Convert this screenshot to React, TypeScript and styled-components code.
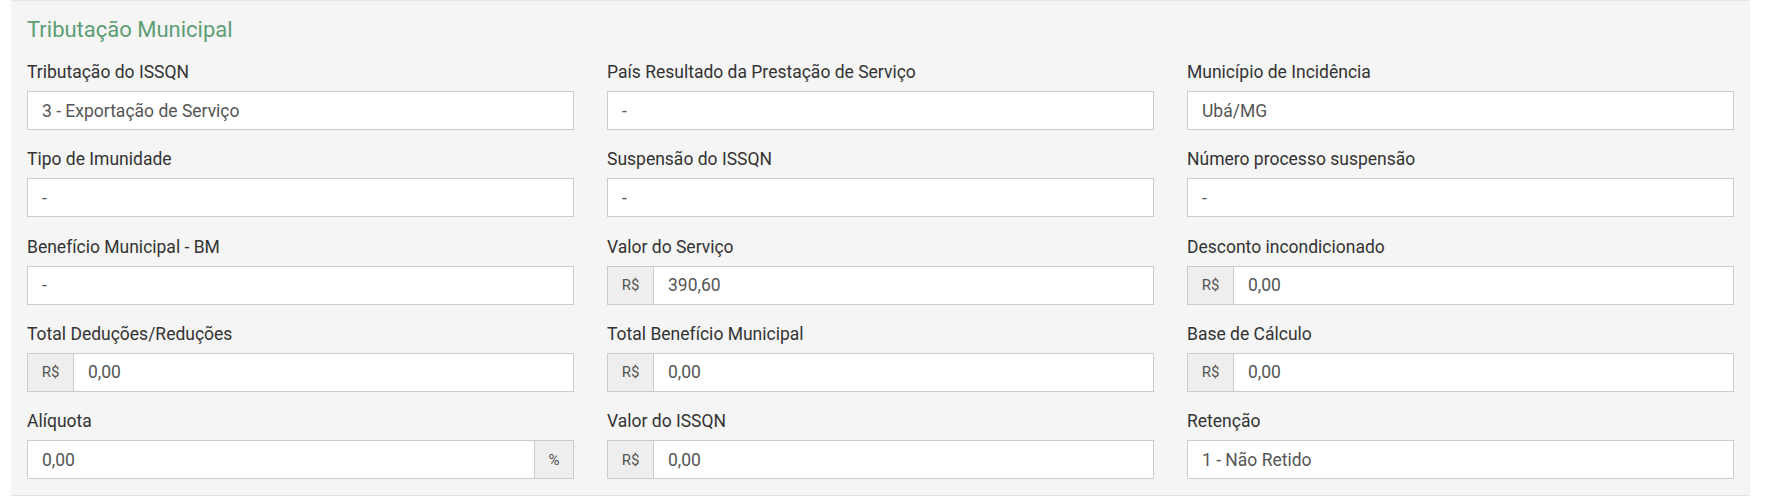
import React from "react";
import styled, { createGlobalStyle } from "styled-components";

const GlobalStyle = createGlobalStyle`
  html, body {
    margin: 0;
    padding: 0;
    background: #ffffff;
  }
  body {
    font-family: Roboto, "Noto Sans", "Liberation Sans", sans-serif;
    -webkit-font-smoothing: antialiased;
  }
  * { box-sizing: border-box; }
`;

const Page = styled.div`
  padding: 0 16px 0 11px;
`;

const Panel = styled.section`
  background: #f5f5f5;
  border-top: 1px solid #e6e6e6;
  border-bottom: 1px solid #e3e3e3;
  padding: 16px 16px 16px 16px;
`;

const Title = styled.h3`
  margin: 0 0 18px 0;
  font-size: 22px;
  line-height: 26px;
  font-weight: 400;
  color: #5d9d76;
`;

const Grid = styled.div`
  display: grid;
  grid-template-columns: repeat(3, 1fr);
  column-gap: 33px;
  row-gap: 18.25px;
`;

const Field = styled.div`
  display: flex;
  flex-direction: column;
  min-width: 0;
`;

const Label = styled.label`
  font-size: 17.5px;
  line-height: 23px;
  color: #333333;
  margin-bottom: 7px;
  white-space: nowrap;
`;

const InputGroup = styled.div`
  display: flex;
  height: 39px;
  border: 1px solid #cccccc;
  background: #ffffff;
`;

const Value = styled.div`
  flex: 1;
  display: flex;
  align-items: center;
  padding: 0 14px;
  font-size: 17.5px;
  color: #555555;
  white-space: nowrap;
  overflow: hidden;
`;

const Addon = styled.span<{ $side: "left" | "right"; $w: number }>`
  flex: 0 0 ${(p) => p.$w}px;
  display: flex;
  align-items: center;
  justify-content: center;
  background: #eeeeee;
  color: #555555;
  font-size: 15px;
  ${(p) =>
    p.$side === "left"
      ? "border-right: 1px solid #cccccc;"
      : "border-left: 1px solid #cccccc;"}
`;

type Item = {
  label: string;
  value: string;
  prefix?: string;
  suffix?: string;
};

const items: Item[] = [
  { label: "Tributação do ISSQN", value: "3 - Exportação de Serviço" },
  { label: "País Resultado da Prestação de Serviço", value: "-" },
  { label: "Município de Incidência", value: "Ubá/MG" },
  { label: "Tipo de Imunidade", value: "-" },
  { label: "Suspensão do ISSQN", value: "-" },
  { label: "Número processo suspensão", value: "-" },
  { label: "Benefício Municipal - BM", value: "-" },
  { label: "Valor do Serviço", value: "390,60", prefix: "R$" },
  { label: "Desconto incondicionado", value: "0,00", prefix: "R$" },
  { label: "Total Deduções/Reduções", value: "0,00", prefix: "R$" },
  { label: "Total Benefício Municipal", value: "0,00", prefix: "R$" },
  { label: "Base de Cálculo", value: "0,00", prefix: "R$" },
  { label: "Alíquota", value: "0,00", suffix: "%" },
  { label: "Valor do ISSQN", value: "0,00", prefix: "R$" },
  { label: "Retenção", value: "1 - Não Retido" },
];

export default function App() {
  return (
    <>
      <GlobalStyle />
      <Page>
        <Panel>
          <Title>Tributação Municipal</Title>
          <Grid>
            {items.map((it) => (
              <Field key={it.label}>
                <Label>{it.label}</Label>
                <InputGroup>
                  {it.prefix && (
                    <Addon $side="left" $w={46}>
                      {it.prefix}
                    </Addon>
                  )}
                  <Value>{it.value}</Value>
                  {it.suffix && (
                    <Addon $side="right" $w={39}>
                      {it.suffix}
                    </Addon>
                  )}
                </InputGroup>
              </Field>
            ))}
          </Grid>
        </Panel>
      </Page>
    </>
  );
}
